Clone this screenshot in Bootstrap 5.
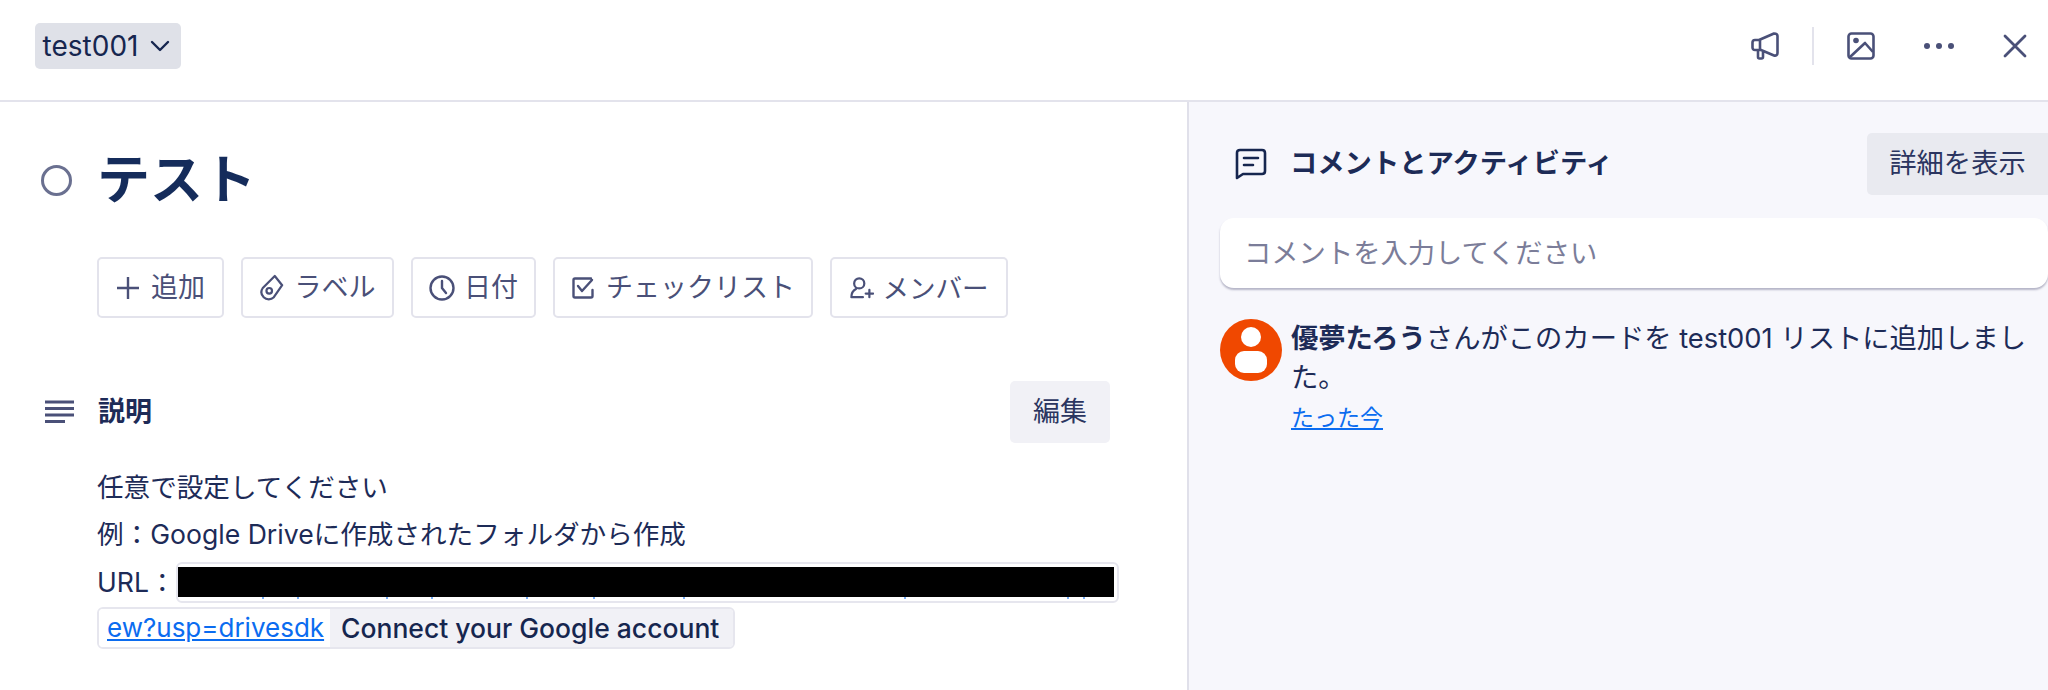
<!doctype html>
<html lang="ja">
  <head>
    <meta charset="utf-8">
    <title>test001</title>
    <link href="https://cdn.jsdelivr.net/npm/bootstrap@5.3.6/dist/css/bootstrap.min.css" rel="stylesheet">
    <style>
      html, body { height: 690px; overflow: hidden; }
      body {
        font-family: Inter, "Noto Sans CJK JP", sans-serif;
        font-size: 27px;
        line-height: 40px;
        color: #1d2b57;
        background: #fff;
      }
      svg { display: block; flex-shrink: 0; }
      .top-bar { height: 102px; padding: 0 21px 8px 35px; border-bottom: 2px solid #e3e3ec; }
      .list-btn {
        height: 46px; width: 146px; padding: 0 9px 0 6px; gap: 12px;
        font-size: 28px; color: #16264f; background: #dfe1e8; border: 0; border-radius: 5px;
      }
      .top-icons { color: #4a5078; }
      .top-sep { width: 2px; height: 38px; background: #e3e3ec; margin: 0 33px; }
      .main-area { height: 588px; }
      .left-pane { width: 1189px; flex-shrink: 0; padding: 0 0 0 41px; border-right: 2px solid #e0e0ea; }
      .title-row { height: 52px; margin-top: 52px; gap: 25px; }
      .status-ring { width: 31px; height: 31px; border: 3px solid #6a7090; border-radius: 50%; }
      .card-title { font-size: 53px; line-height: 52px; font-weight: 700; color: #152c5b; margin: 0; }
      .action-row { margin: 51px 0 0 56px; gap: 17px; }
      .action-btn {
        height: 61px; padding: 0; gap: 11px;
        font-size: 27px; color: #4a5078; background: #fff;
        border: 2px solid #e3e3ec; border-radius: 5px;
      }
      .act-add { width: 127px; }
      .act-date { width: 125px; gap: 9px; }
      .act-label { width: 153px; }
      .act-check { width: 260px; }
      .act-member { width: 178px; gap: 9px; font-size: 26.500px; }
      .desc-head { height: 62px; margin-top: 63px; gap: 24px; width: 1069px; }
      .sec-title { font-weight: 700; color: #1d2b57; }
      .soft-btn {
        height: 62px; font-size: 27px; color: #2b3560; background: #f1f1f6;
        border: 0; border-radius: 5px; padding: 0;
      }
      .edit-btn { width: 100px; }
      .desc-body { margin: 21px 0 0 56px; font-size: 26.600px; }
      .desc-line { height: 47px; line-height: 47px; }
      .url-line { height: 48px; }
      .url-box {
        width: 943px; height: 41px; padding: 3px 3px 1px 0;
        background: #fff; border: 2px solid #e6e6ee; border-radius: 6px;
      }
      .url-mask { height: 30px; background: #000; }
      .url-ticks { opacity: .55; }
      .link-box {
        width: 638px; height: 42px; margin-top: 1px; line-height: 38px;
        border: 2px solid #e6e6ee; border-radius: 6px; overflow: hidden;
      }
      .link-box a { width: 231px; padding-left: 8px; flex-shrink: 0; font-size: 26px; background: #fff; }
      .link-name { flex: 1; padding-left: 11px; background: #f1f1f6; font-size: 26.500px; font-weight: 500; white-space: nowrap; color: #16264f; }
      a { color: #0b6cf0; }
      .right-pane { flex: 1; min-width: 0; padding: 31px 0 0 31px; background: #f7f7fc; font-size: 27.300px; }
      .act-head { height: 62px; }
      .act-icon { margin-left: 15px; margin-right: 23px; color: #16264f; }
      .more-btn { width: 181px; font-size: 27.300px; background: #e9eaf0; border-radius: 5px 0 0 5px; }
      .note-input.form-control {
        height: 70px; margin-top: 23px; padding: 0 24px;
        font-size: 27.300px; color: #1d2b57; background: #fff;
        border: 0; border-radius: 14px; box-shadow: 0 2px 2px rgba(60, 60, 100, .35);
      }
      .note-input.form-control::placeholder { color: #7b7d99; opacity: 1; }
      .activity { margin-top: 31px; gap: 9px; line-height: 39px; }
      .avatar { width: 62px; height: 62px; border-radius: 50%; background: #f04800; flex-shrink: 0; overflow: hidden; }
      .activity p { margin: 0; color: #1d2b57; }
      .activity a { display: inline-block; font-size: 23px; line-height: 38px; }
    </style>
  </head>
  <body>
    <header class="top-bar d-flex align-items-center justify-content-between">
      <button class="list-btn d-flex align-items-center justify-content-center" type="button">
        test001
        <svg width="20" height="12" viewBox="0 0 20 12" fill="none" stroke="currentColor" stroke-width="2.400" stroke-linecap="round" stroke-linejoin="round"><path d="M2 2l8 8 8-8"/></svg>
      </button>
      <div class="top-icons d-flex align-items-center">
        <svg width="28" height="28" viewBox="0 0 28 28" fill="none" stroke="currentColor" stroke-width="2.600" stroke-linejoin="round"><path d="M8 8l15-6.500c2 0 3.500.8 3.500 2.500v17c0 2-1.500 3-3.500 2.500L10 18H4c-1.500 0-2.500-1-2.500-2.500v-5C1.500 9 2.500 8 4 8h4zM9 8v10M7 18v7c0 1 .7 1.500 1.500 1.500h2c1 0 1.500-.5 1.500-1.500v-5.500"/></svg>
        <div class="top-sep"></div>
        <svg width="28" height="28" viewBox="0 0 28 28" fill="none" stroke="currentColor" stroke-width="2.600" stroke-linejoin="round"><rect x="1.500" y="1.500" width="25" height="25" rx="3"/><circle cx="9" cy="8.500" r="2.800" fill="currentColor" stroke="none"/><path d="M3 25l15-14 8 9"/></svg>
        <svg class="ms-5" width="32" height="8" viewBox="0 0 32 8" fill="currentColor"><circle cx="4" cy="4" r="3"/><circle cx="16" cy="4" r="3"/><circle cx="28" cy="4" r="3"/></svg>
        <svg class="ms-5" width="24" height="24" viewBox="0 0 24 24" fill="none" stroke="currentColor" stroke-width="2.800" stroke-linecap="round"><path d="M2 2l20 20M22 2L2 22"/></svg>
      </div>
    </header>

    <div class="main-area d-flex">
      <main class="left-pane">
        <div class="title-row d-flex align-items-center">
          <span class="status-ring"></span>
          <h1 class="card-title">テスト</h1>
        </div>

        <div class="action-row d-flex">
          <button class="action-btn act-add d-flex align-items-center justify-content-center" type="button">
            <svg width="24" height="24" viewBox="0 0 24 24" fill="none" stroke="currentColor" stroke-width="2.400"><path d="M12 1v22M1 12h22"/></svg>
            追加
          </button>
          <button class="action-btn act-label d-flex align-items-center justify-content-center" type="button">
            <svg width="24" height="28" viewBox="0 0 26 30" fill="none" stroke="currentColor" stroke-width="2.400" stroke-linejoin="round"><path d="M16 2l8 10-9 13c-3 3-8 3-11 0s-3-7-1-10z"/><circle cx="10" cy="18" r="3"/></svg>
            ラベル
          </button>
          <button class="action-btn act-date d-flex align-items-center justify-content-center" type="button">
            <svg width="26" height="28" viewBox="0 0 26 28" fill="none" stroke="currentColor" stroke-width="2.400" stroke-linecap="round"><circle cx="13" cy="14" r="11.500"/><path d="M13 7v7l4 5"/></svg>
            日付
          </button>
          <button class="action-btn act-check d-flex align-items-center justify-content-center" type="button">
            <svg width="24" height="24" viewBox="0 0 24 24" fill="none" stroke="currentColor" stroke-width="2.400" stroke-linecap="round" stroke-linejoin="round"><path d="M20 2.500H4c-1 0-1.500.5-1.500 1.500v16c0 1 .5 1.500 1.500 1.500h16c1 0 1.500-.5 1.500-1.500v-6M7 10l4 5 10-11"/></svg>
            チェックリスト
          </button>
          <button class="action-btn act-member d-flex align-items-center justify-content-center" type="button">
            <svg width="24" height="24" viewBox="0 0 26 24" fill="none" stroke="currentColor" stroke-width="2.400" stroke-linecap="round" stroke-linejoin="round"><circle cx="10" cy="7" r="5.500"/><path d="M14 22H1.500c0-5 2-7.500 5-9M21 14v8M17 18h8"/></svg>
            メンバー
          </button>
        </div>

        <div class="desc-head d-flex align-items-center">
          <svg class="ms-1" width="29" height="24" viewBox="0 0 29 24" fill="none" stroke="#4a5078" stroke-width="2.800"><path d="M0 2h29M0 8.500h29M0 15h29M0 21.500h20"/></svg>
          <span class="sec-title flex-grow-1">説明</span>
          <button class="soft-btn edit-btn" type="button">編集</button>
        </div>

        <div class="desc-body">
          <div class="desc-line">任意で設定してください</div>
          <div class="desc-line">例：Google Driveに作成されたフォルダから作成</div>
          <div class="url-line d-flex align-items-center">
            <span>URL：</span>
            <div class="url-box">
              <div class="url-mask"></div>
              <svg class="url-ticks" width="938" height="3" viewBox="0 0 938 3" fill="none" stroke="#0b6cf0" stroke-width="2"><path d="M85 0v2M120 0v2M209 0v2M254 0v2M349 0v2M416 0v2M506 0v2M727 0v2M890 0v2M906 0v2"/></svg>
            </div>
          </div>
          <div class="link-box d-flex">
            <a href="#">ew?usp=drivesdk</a>
            <span class="link-name">Connect your Google account</span>
          </div>
        </div>
      </main>

      <aside class="right-pane">
        <div class="act-head d-flex align-items-center">
          <svg class="act-icon" width="32" height="32" viewBox="0 0 32 32" fill="none" stroke="currentColor" stroke-width="2.600" stroke-linecap="round" stroke-linejoin="round"><path d="M2 30V5c0-2 1-3 3-3h22c2 0 3 1 3 3v18c0 2-1 3-3 3H8zM9 10h14M9 17h9"/></svg>
          <span class="sec-title flex-grow-1">コメントとアクティビティ</span>
          <button class="soft-btn more-btn" type="button">詳細を表示</button>
        </div>
        <input class="form-control note-input" type="text" placeholder="コメントを入力してください">
        <div class="activity d-flex">
          <div class="avatar">
            <svg width="62" height="62" viewBox="0 0 62 62" fill="#fff"><ellipse cx="31" cy="18" rx="10" ry="10"/><rect x="15" y="32" width="32" height="22" rx="9"/></svg>
          </div>
          <div>
            <p><strong>優夢たろう</strong>さんがこのカードを test001 リストに追加しました。</p>
            <a href="#">たった今</a>
          </div>
        </div>
      </aside>
    </div>

    <script src="https://cdn.jsdelivr.net/npm/bootstrap@5.3.6/dist/js/bootstrap.bundle.min.js"></script>
  </body>
</html>
